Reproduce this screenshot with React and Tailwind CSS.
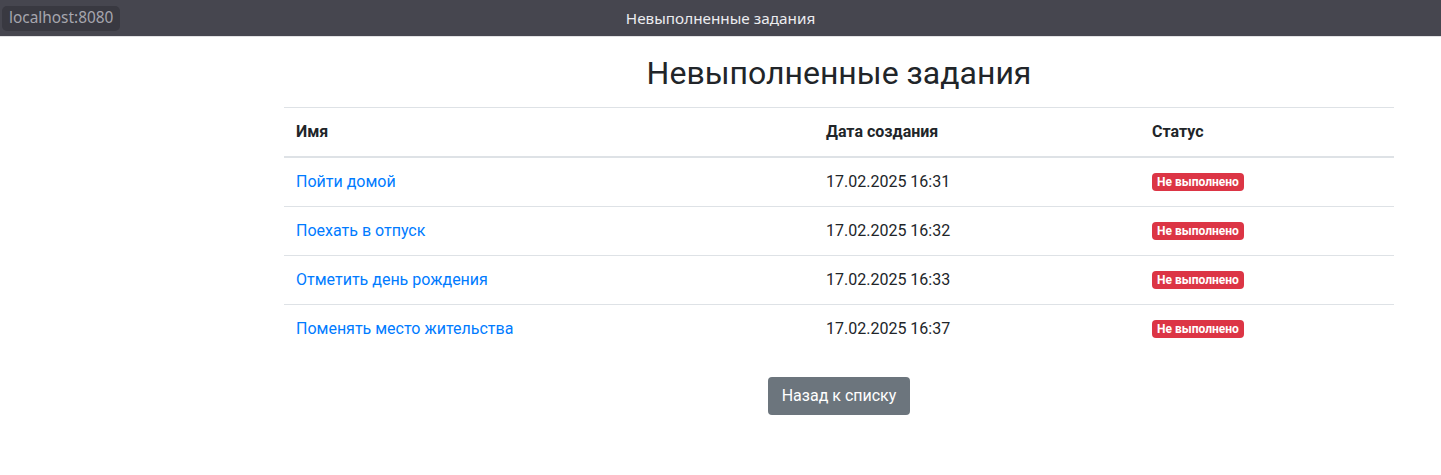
export default function App() {
  const rows = [
    ["Пойти домой", "17.02.2025 16:31"],
    ["Поехать в отпуск", "17.02.2025 16:32"],
    ["Отметить день рождения", "17.02.2025 16:33"],
    ["Поменять место жительства", "17.02.2025 16:37"],
  ];
  return (
    <div className="min-h-[475px] bg-white">
      <div className="h-[37px] bg-[#46464f] flex items-center relative border-b border-[#e2e2e4]" style={{ fontFamily: '"Noto Sans", sans-serif' }}>
        <div className="ml-[2px] h-[25px] px-[7px] rounded-[5px] bg-[#393941] text-[#a6a6ae] text-[15.4px] flex items-center">localhost:8080</div>
        <div className="absolute left-0 right-0 text-center text-[#ececef] text-[15.3px] pointer-events-none">Невыполненные задания</div>
      </div>
      <div className="ml-[284px] w-[1110px] text-[#212529]" style={{ fontFamily: 'Roboto, "Liberation Sans", sans-serif' }}>
        <h2 className="text-[32px] leading-[38px] text-center mt-[17px] mb-[15px] font-normal">Невыполненные задания</h2>
        <table className="w-full border-collapse text-[16px] leading-6">
          <thead>
            <tr className="border-t border-[#dee2e6] border-b-2">
              <th className="w-[530px] text-left font-bold p-3">Имя</th>
              <th className="w-[326px] text-left font-bold p-3">Дата создания</th>
              <th className="text-left font-bold p-3">Статус</th>
            </tr>
          </thead>
          <tbody>
            {rows.map(([name, date], i) => (
              <tr key={i} className={i > 0 ? "border-t border-[#dee2e6]" : ""}>
                <td className="p-3"><a href="#" className="text-[#007bff]">{name}</a></td>
                <td className="p-3">{date}</td>
                <td className="p-3">
                  <span className="inline-block bg-[#dc3545] text-white text-[12px] font-bold leading-none px-[5px] pt-[3px] pb-[3px] rounded-[4px] align-[1px]">Не выполнено</span>
                </td>
              </tr>
            ))}
          </tbody>
        </table>
        <div className="flex justify-center mt-6">
          <button className="bg-[#6c757d] text-white text-[16px] leading-6 px-[13.5px] py-[7px] rounded-[4px]">Назад к списку</button>
        </div>
      </div>
    </div>
  );
}
